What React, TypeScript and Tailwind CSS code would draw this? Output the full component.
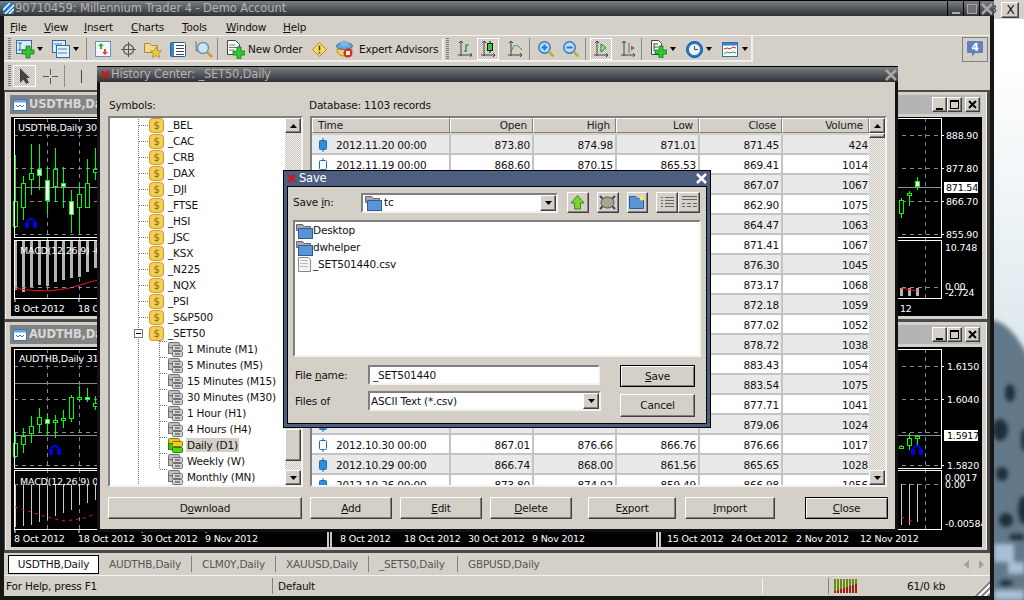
import React from "react";

type IC = { className?: string };
const Svg = ({ w, h, className, children }: { w: number; h: number; className?: string; children: React.ReactNode }) => (
  <svg width={w} height={h} viewBox={`0 0 ${w} ${h}`} className={`shrink-0 ${className ?? ""}`}>{children}</svg>
);

const Grip = ({ className }: IC) => (
  <div className={`w-[3px] h-[22px] shrink-0 bg-[repeating-linear-gradient(#777_0_1px,transparent_1px_2px)] ${className ?? ""}`} />
);
const Sep = ({ className }: IC) => <div className={`w-[1px] h-[22px] shrink-0 bg-[#8a8a86] ${className ?? ""}`} />;
const Caret = ({ className }: IC) => (
  <Svg w={6} h={4} className={className}><path d="M0 0h6L3 4z" fill="#000" /></Svg>
);
const GreenPlus = ({ x, y }: { x: number; y: number }) => (
  <path transform={`translate(${x} ${y})`} d="M4 0h4v4h4v4H8v4H4V8H0V4h4z" fill="#2fc92f" stroke="#107a10" strokeWidth="0.8" />
);
const Axes = ({ x = 0 }: { x?: number }) => (
  <g transform={`translate(${x} 0)`} stroke="#444" fill="none"><path d="M3 1v15M0 15h14M1 3l2-2 2 2M12 13l2 2-2 2" /></g>
);

const NewChart = ({ className }: IC) => (
  <Svg w={19} h={19} className={className}>
    <rect x="0.5" y="0.5" width="15" height="13" fill="#dfeaf6" stroke="#2a6db0" />
    <path d="M2 3h4M4 3v7M2 10h9" stroke="#2a6db0" />
    <GreenPlus x={6} y={6} />
  </Svg>
);
const Profile = ({ className }: IC) => (
  <Svg w={18} h={18} className={className}>
    <rect x="0.5" y="0.5" width="13" height="12" fill="#dfeaf6" stroke="#2a6db0" />
    <rect x="4.5" y="5.5" width="13" height="12" fill="#e8f0f8" stroke="#2a6db0" />
    <path d="M2 4h8M6 9h9M6 13h9" stroke="#4480bb" />
  </Svg>
);
const Market = ({ className }: IC) => (
  <Svg w={16} h={16} className={className}>
    <rect x="0.5" y="0.5" width="15" height="15" fill="#f4f8fc" stroke="#5f93c9" />
    <path d="M6 2l3 3H7v3H5V5H3z" fill="#2eb52e" /><path d="M10 14l-3-3h2V8h2v3h2z" fill="#e04a2a" />
  </Svg>
);
const Cross = ({ className }: IC) => (
  <Svg w={15} h={15} className={className}>
    <circle cx="7.5" cy="7.5" r="5" fill="none" stroke="#666" strokeWidth="1.5" />
    <path d="M7.5 0v15M0 7.5h15" stroke="#555" />
  </Svg>
);
const FolderStar = ({ className }: IC) => (
  <Svg w={18} h={17} className={className}>
    <path d="M0.5 2.5h5l2 2h6v7h-13z" fill="#f3d98a" stroke="#a68a3c" />
    <path d="M12 6l1.7 3.6 3.8.4-2.8 2.6.8 3.9-3.5-2-3.5 2 .8-3.9L6.500 10l3.800-.4z" fill="#f0c93a" stroke="#a08420" strokeWidth="0.7" />
  </Svg>
);
const ListIcon = ({ className }: IC) => (
  <Svg w={16} h={15} className={className}>
    <rect x="0.500" y="0.500" width="15" height="14" rx="1" fill="#fff" stroke="#1f5f9f" />
    <rect x="1" y="1" width="3" height="13" fill="#3b83c9" />
    <path d="M6 3.500h8M6 6.500h8M6 9.500h8M6 12.500h8" stroke="#444" />
  </Svg>
);
const Tester = ({ className }: IC) => (
  <Svg w={18} h={18} className={className}>
    <path d="M1 1v10h10" stroke="#777" fill="none" />
    <circle cx="8" cy="8" r="5.500" fill="#cfe2f3" stroke="#6a8fb0" strokeWidth="1.400" />
    <path d="M12 12l5 5" stroke="#c9a030" strokeWidth="2.500" />
  </Svg>
);
const NewOrder = ({ className }: IC) => (
  <Svg w={18} h={19} className={className}>
    <path d="M0.500 0.500h8l4 4v10h-12z" fill="#fff" stroke="#444" />
    <path d="M2 5h6M2 7.500h8M2 10h5" stroke="#777" />
    <GreenPlus x={6} y={7} />
  </Svg>
);
const Warn = ({ className }: IC) => (
  <Svg w={15} h={15} className={className}>
    <path d="M7.500 0.500l7 7-7 7-7-7z" fill="#f7d860" stroke="#b08a20" />
    <path d="M7.500 3.500v5M7.500 10v1.500" stroke="#444" strokeWidth="1.500" />
  </Svg>
);
const EA = ({ className }: IC) => (
  <Svg w={17} h={18} className={className}>
    <path d="M1 9c0 5 3 7 8 7s7-2 7-7z" fill="#f4cf60" stroke="#b08a20" />
    <ellipse cx="8.500" cy="6" rx="8" ry="3.500" fill="#6aa5d8" stroke="#3a6f9f" />
    <ellipse cx="8.500" cy="3.500" rx="4" ry="3" fill="#7cb6e4" />
    <circle cx="12" cy="13" r="4.500" fill="#d92a1a" /><rect x="10" y="11" width="4" height="4" fill="#fff" />
  </Svg>
);
const BarChartI = ({ className }: IC) => (
  <Svg w={14} h={18} className={className}>
    <Axes /><path d="M8 12V5h3M8 11H6" stroke="#1a8a1a" fill="none" strokeWidth="1.200" />
  </Svg>
);
const CandleI = ({ className }: IC) => (
  <Svg w={15} h={18} className={className}>
    <Axes /><path d="M9 1v12" stroke="#111" /><rect x="6.500" y="3.500" width="5" height="7" fill="#2fd02f" stroke="#111" />
  </Svg>
);
const LineI = ({ className }: IC) => (
  <Svg w={15} h={18} className={className}>
    <Axes /><path d="M3 12C6 3 9 4 14 10" stroke="#2a9a2a" fill="none" />
  </Svg>
);
const ZoomI = ({ plus, className }: IC & { plus?: boolean }) => (
  <Svg w={16} h={16} className={className}>
    <circle cx="6.500" cy="6.500" r="5.700" fill="#bcdcf8" stroke="#2a78c0" strokeWidth="1.400" />
    <path d={plus ? "M3.500 6.500h6M6.500 3.500v6" : "M3.500 6.500h6"} stroke="#2a78c0" strokeWidth="2" />
    <path d="M10.500 10.500l5 5" stroke="#caa53a" strokeWidth="2.500" />
  </Svg>
);
const AutoI = ({ className }: IC) => (
  <Svg w={15} h={18} className={className}>
    <Axes /><path d="M7 4l5 4-5 4z" fill="#9be29b" stroke="#1a8a1a" />
  </Svg>
);
const ShiftI = ({ className }: IC) => (
  <Svg w={15} h={18} className={className}>
    <Axes /><path d="M8 3v10" stroke="#2a78c0" /><path d="M14 8l-4-2.500v5z" fill="#d8481c" />
  </Svg>
);
const AddI = ({ className }: IC) => (
  <Svg w={16} h={18} className={className}>
    <path d="M0.500 0.500h7l3 3v11h-10z" fill="#fff" stroke="#444" />
    <path d="M3 3v8M3 4h4M3 7h4" stroke="#444" />
    <GreenPlus x={4} y={6} />
  </Svg>
);
const ClockI = ({ className }: IC) => (
  <Svg w={17} h={17} className={className}>
    <circle cx="8.500" cy="8.500" r="8" fill="#1f7fd0" stroke="#0f4f90" />
    <circle cx="8.500" cy="8.500" r="5.500" fill="#f2f2f2" />
    <path d="M8.500 5v3.500H12" stroke="#444" fill="none" />
  </Svg>
);
const TemplateI = ({ className }: IC) => (
  <Svg w={16} h={15} className={className}>
    <rect x="0.500" y="0.500" width="15" height="14" fill="#fff" stroke="#2a6db0" />
    <rect x="1" y="1" width="14" height="2.500" fill="#3b83c9" />
    <path d="M2 7l3-1 3 1 3-2 3 1" stroke="#c03020" fill="none" />
    <path d="M2 12l3-2 3 1 3-1 3 1" stroke="#2a9a2a" fill="none" />
  </Svg>
);

const Active = ({ className, children, h = "h-[22px]" }: IC & { children: React.ReactNode; h?: string }) => (
  <div className={`w-[22px] ${h} shrink-0 flex items-center justify-center border border-white bg-[repeating-conic-gradient(#bdb9b2_0_25%,#ece9e3_0_50%)] bg-[length:2px_2px] ${className ?? ""}`}>
    {children}
  </div>
);

const RedX = () => (
  <Svg w={9} h={9}><path d="M1 1l7 7M8 1L1 8" stroke="#e01010" strokeWidth="2" /></Svg>
);

const btn = "flex items-center justify-center bg-[#d4d0c8] border border-t-white border-l-white border-r-[#404040] border-b-[#404040] shadow-[inset_-1px_-1px_0_#808080] text-[#111]";
const defBtn = "flex items-center justify-center bg-[#d4d0c8] border border-black shadow-[inset_1px_1px_0_#fff,inset_-1px_-1px_0_#808080] text-[#111]";
const dither = "bg-[repeating-conic-gradient(#c8c4bc_0_25%,#f4f3f0_0_50%)] bg-[length:2px_2px]";
const sunken = "border-2 border-t-[#808080] border-l-[#808080] border-r-[#f4f3f0] border-b-[#f4f3f0]";

const Arrow = ({ up }: { up?: boolean }) => (
  <div className={`w-[16px] h-[15px] shrink-0 ${btn}`}>
    <Svg w={7} h={4}><path d={up ? "M3.500 0L7 4H0z" : "M0 0h7L3.500 4z"} fill="#000" /></Svg>
  </div>
);

// ---------- charts ----------
type C = [number, number, number, number, number, boolean];
const Candles = ({ data }: { data: C[] }) => (
  <g shapeRendering="crispEdges">
    {data.map(([x, wt, wb, bt, bb, f], i) => (
      <g key={i}>
        <rect x={x} y={wt} width={1} height={wb - wt} fill="#00ff00" />
        <rect x={x - 1.5} y={bt + 0.5} width={4} height={Math.max(bb - bt - 1, 2)} fill={f ? "#fff" : "#000"} stroke="#00ff00" />
      </g>
    ))}
  </g>
);
const Phones = ({ x, y }: { x: number; y: number }) => (
  <g transform={`translate(${x} ${y})`}>
    <path d="M-4 3v-2a4 4 0 0 1 8 0v2" fill="none" stroke="#0000f0" strokeWidth="1.800" />
    <rect x="-6" y="0" width="4" height="6" rx="1" fill="#0000f0" /><rect x="2" y="0" width="4" height="6" rx="1" fill="#0000f0" />
  </g>
);
const L = ({ x, y, t, c = "#fff", a }: { x: number; y: number; t: string; c?: string; a?: "end" }) => (
  <text x={x} y={y} fill={c} fontSize="9.500" textAnchor={a} fontFamily="'DejaVu Sans',sans-serif">{t}</text>
);
const grid = { stroke: "#7a8a9a", strokeDasharray: "4 4", fill: "none" };

const Chart1 = () => {
  const bars: [number, number][] = [[15, 290], [23, 292], [31, 287], [39, 285], [47, 286], [55, 282], [63, 280], [71, 278], [79, 277], [87, 272], [95, 268]];
  return (
    <svg width={971} height={199} viewBox="11 117 971 199" className="block">
      {[135, 168, 201, 234].map((y) => <path key={y} d={`M14 ${y}.5H941`} {...grid} />)}
      {[47.500, 79.500, 925.500].map((x) => <path key={x} d={`M${x} 118V298`} {...grid} />)}
      <path d="M14 187.500H941" stroke="#8a8f96" />
      <Candles data={[[15, 155, 228, 201, 227, false], [23, 176, 220, 183, 208, false], [31, 144, 195, 173, 180, false], [39, 144, 190, 169, 176, true], [47, 167, 214, 180, 201, true], [55, 148, 202, 169, 187, false], [63, 167, 208, 183, 187, true], [71, 190, 233, 201, 215, true], [79, 183, 233, 194, 208, false], [87, 159, 208, 183, 208, false], [95, 148, 180, 169, 173, false], [901, 198, 218, 200, 214, false], [909, 191, 206, 193, 196, false], [917, 177, 190, 181, 187, true]]} />
      <Phones x={31} y={222} />
      {bars.map(([x, b]) => <rect key={x} x={x - 1} y={240} width={3} height={b - 240} fill="#b4b4b4" />)}
      {[901, 909, 917].map((x) => <rect key={x} x={x - 1} y={288} width={3} height={8} fill="#b4b4b4" />)}
      <path d="M14 288l12 2 24 1 20-3 20-6 8-2M901 288l16 3" stroke="#ff1010" fill="none" />
      <path d="M14 287.500H941" {...grid} />
      <rect x="14.500" y="118.500" width="927" height="119" fill="none" stroke="#fff" />
      <rect x="14.500" y="240.500" width="927" height="58" fill="none" stroke="#fff" />
      <L x={18} y={131} t="USDTHB,Daily  30." />
      <L x={20} y={254} t="MACD(12,26,9) -0.J" />
      <L x={14} y={312} t="8 Oct 2012" /><L x={78} y={312} t="18 Oct 2012" /><L x={900} y={312} t="12" />
      <path d="M15 298v4M79 298v4" stroke="#fff" />
      {[[888.9, 139], [877.8, 172], [866.7, 205], [855.9, 238]].map(([v, y]) => <g key={v}><path d={`M941 ${y - 4}.5h3`} stroke="#fff" /><L x={946} y={y} t={v.toFixed(2)} /></g>)}
      <rect x="944" y="182" width="34" height="11" fill="#fff" />
      <L x={946} y={191} t="871.54" c="#000" />
      <L x={945} y={251} t="10.748" /><L x={945} y={290} t="0.00" /><L x={945} y={296} t="-2.724" />
    </svg>
  );
};

const Chart2 = () => {
  const bars: [number, number][] = [[15, 527], [23, 526], [31, 525], [39, 522], [47, 520], [55, 516], [63, 513], [71, 510], [79, 505], [87, 503], [95, 500]];
  return (
    <svg width={971} height={200} viewBox="11 347 971 200" className="block">
      {[366, 399, 432, 465].map((y) => <path key={y} d={`M14 ${y}.5H941`} {...grid} />)}
      {[47.500, 79.500, 925.500].map((x) => <path key={x} d={`M${x} 349V529`} {...grid} />)}
      <path d="M14 383.500H100M14 435.500H941" stroke="#8a8f96" />
      <Candles data={[[15, 432, 458, 443, 457, false], [23, 428, 453, 436, 445, false], [31, 416, 443, 426, 434, false], [39, 408, 433, 417, 425, false], [47, 414, 436, 419, 424, true], [55, 415, 438, 420, 423, false], [63, 410, 428, 418, 420, false], [71, 395, 422, 397, 419, false], [79, 386, 402, 397, 398, false], [87, 388, 402, 397, 399, true], [95, 396, 410, 403, 407, false], [901, 445, 448, 446, 447, false], [909, 433, 450, 438, 446, false], [917, 435, 445, 436, 438, false]]} />
      <Phones x={55} y={449} /><Phones x={917} y={449} />
      {bars.map(([x, b]) => <rect key={x} x={x} y={484} width={1} height={b - 484} fill="#c8c8c8" />)}
      {[[901, 525], [909, 525], [917, 522]].map(([x, b]) => <rect key={x} x={x} y={484} width={1} height={b - 484} fill="#c8c8c8" />)}
      <path d="M15 507l32 10 18 4 20-3 10-4" stroke="#ff1010" strokeDasharray="3 4" fill="none" />
      <path d="M901 517l3 1M908 521h4" stroke="#ff1010" />
      <path d="M14 484.500H941" {...grid} />
      <rect x="14.500" y="349.500" width="927" height="119" fill="none" stroke="#fff" />
      <rect x="14.500" y="470.500" width="927" height="59" fill="none" stroke="#fff" />
      <L x={19} y={362} t="AUDTHB,Daily  31." />
      <L x={20} y={485} t="MACD(12,26,9) 0.0" />
      {[["8 Oct 2012", 14], ["18 Oct 2012", 78], ["30 Oct 2012", 141], ["9 Nov 2012", 205], ["8 Oct 2012", 340], ["18 Oct 2012", 404], ["30 Oct 2012", 468], ["9 Nov 2012", 532], ["15 Oct 2012", 667], ["24 Oct 2012", 731], ["2 Nov 2012", 796], ["12 Nov 2012", 860]].map(([t, x]) => <L key={`${t}${x}`} x={x as number} y={542} t={t as string} />)}
      <path d="M15 529v4M79 529v4M142 529v4M206 529v4" stroke="#fff" />
      <rect x="327" y="531" width="2" height="16" fill="#c8c8c8" /><rect x="330" y="531" width="2" height="16" fill="#c8c8c8" />
      <rect x="656" y="531" width="2" height="16" fill="#c8c8c8" /><rect x="659" y="531" width="2" height="16" fill="#c8c8c8" />
      {[["1.6150", 370], ["1.6040", 403], ["1.5820", 469]].map(([v, y]) => <g key={v}><path d={`M941 ${(y as number) - 4}.5h3`} stroke="#fff" /><L x={947} y={y as number} t={v as string} /></g>)}
      <rect x="944" y="430" width="34" height="11" fill="#fff" />
      <L x={947} y={439} t="1.5917" c="#000" />
      <L x={945} y={481} t="0.0017" /><L x={945} y={488} t="0.00" /><L x={945} y={527} t="-0.00584" />
    </svg>
  );
};

const ChildButtons = () => (
  <div className="ml-auto mr-[1px] flex items-center">
    <div className={`w-[15px] h-[15px] relative ${btn}`}><div className="w-[7px] h-[2px] bg-black mt-[8px]" /></div>
    <div className={`w-[15px] h-[15px] ${btn}`}><div className="w-[9px] h-[9px] border border-black border-t-2" /></div>
    <div className={`w-[15px] h-[15px] ml-[3px] ${btn}`}><Svg w={9} h={9}><path d="M1 1l7 7M8 1L1 8" stroke="#000" strokeWidth="2" /></Svg></div>
  </div>
);

const Child = ({ title, top, h, children }: { title: string; top: string; h: string; children: React.ReactNode }) => (
  <div className={`absolute left-[1px] w-[982px] ${top} ${h} flex flex-col bg-[#d4d0c8] border-x border-[#f0f0f0] pl-[5px] pr-[4px] pt-[3px]`}>
    <div className="h-[19px] shrink-0 -ml-[1px] mr-[1px] flex items-center pl-[3px] bg-gradient-to-r from-[#808080] to-[#b8b8b8]">
      <Svg w={15} h={15}><rect x="0.500" y="2.500" width="13" height="11" fill="#fff" stroke="#3a7ac0" /><rect x="1" y="3" width="12" height="2.500" fill="#6aa5e0" /><path d="M3 8l2 2 2-2 2 2 2-2" stroke="#3a7ac0" fill="none" /></Svg>
      <span className="ml-[1px] font-bold text-[11.500px] text-[#d8d8d8]">{title}</span>
      <ChildButtons />
    </div>
    <div className="mt-[3px] bg-black overflow-hidden">{children}</div>
  </div>
);

// ---------- tree ----------
const Coin = () => (
  <Svg w={15} h={15}>
    <rect x="0.500" y="0.500" width="14" height="14" rx="3" fill="#f6cd55" stroke="#c79a2a" />
    <text x="7.500" y="11" fontSize="10" textAnchor="middle" fill="#8a6a10" fontFamily="'DejaVu Sans',sans-serif">$</text>
  </Svg>
);
const Stack = ({ on }: { on?: boolean }) => (
  <Svg w={15} h={15}>
    <rect x="0.500" y="0.500" width="11" height="6" rx="1" fill={on ? "#e8c820" : "#bdbdbd"} stroke={on ? "#8a7410" : "#707070"} />
    <rect x="0.500" y="5.500" width="5" height="6" fill={on ? "#38c818" : "#bdbdbd"} stroke={on ? "#208010" : "#707070"} />
    <rect x="4.500" y="3.500" width="10" height="5" rx="1" fill={on ? "#f0d020" : "#d4d4d4"} stroke={on ? "#8a7410" : "#707070"} />
    <rect x="4.500" y="9.500" width="10" height="5" rx="1" fill={on ? "#50d810" : "#d4d4d4"} stroke={on ? "#208010" : "#707070"} />
    {!on && <path d="M7 6h5M7 12h5" stroke="#333" />}
  </Svg>
);
const Sym = ({ t }: { t?: string }) => (
  <div className="h-[16px] flex items-center pl-[39px] shrink-0"><Coin />{t && <span className="ml-[4px] text-[#111]">{t}</span>}</div>
);
const Tf = ({ t, on }: { t: string; on?: boolean }) => (
  <div className="h-[16px] flex items-center pl-[58px] shrink-0"><Stack on={on} /><span className={`ml-[3px] px-[1px] py-[2px] text-[#111] ${on ? "bg-[#d4d0c8]" : ""}`}>{t}</span></div>
);

const Tree = () => (
  <div className={`w-[195px] relative flex flex-col overflow-hidden bg-white ${sunken}`}>
    <div className="flex flex-col -mt-[1px]">
      {["_BEL", "_CAC", "_CRB", "_DAX", "_DJI", "_FTSE", "_HSI", "_JSC", "_KSX", "_N225", "_NQX", "_PSI", "_S&P500", "_SET50"].map((s) => <Sym key={s} t={s} />)}
      {["1 Minute (M1)", "5 Minutes (M5)", "15 Minutes (M15)", "30 Minutes (M30)", "1 Hour (H1)", "4 Hours (H4)"].map((s) => <Tf key={s} t={s} />)}
      <Tf t="Daily (D1)" on />
      <Tf t="Weekly (W)" /><Tf t="Monthly (MN)" />
      <Sym />
    </div>
    <svg className="absolute left-0 -top-[1px] pointer-events-none" width={175} height={370}>
      <g stroke="#777" strokeDasharray="1 1" fill="none">
        <path d="M28.500 0V370M49.500 224V352" />
        {Array.from({ length: 13 }, (_, i) => <path key={i} d={`M29 ${8.500 + i * 16}h9`} />)}
        {Array.from({ length: 9 }, (_, i) => <path key={i} d={`M50 ${224.500 + i * 16}h8`} />)}
      </g>
      <rect x="24.500" y="212.500" width="8" height="8" fill="#fff" stroke="#777" />
      <path d="M26 216.500h5" stroke="#000" />
    </svg>
    <div className="absolute right-0 top-0 bottom-0 w-[16px] flex flex-col">
      <Arrow up />
      <div className={`h-[296px] ${dither}`} />
      <div className={`h-[32px] ${btn}`} />
      <div className={`flex-1 ${dither}`} />
      <Arrow />
    </div>
  </div>
);

// ---------- table ----------
const rows: (string | number)[][] = [
  ["2012.11.20 00:00", "873.80", "874.98", "871.01", "871.45", 424],
  ["2012.11.19 00:00", "868.60", "870.15", "865.53", "869.41", 1014],
  ["", "", "", "", "867.07", 1067],
  ["", "", "", "", "862.90", 1075],
  ["", "", "", "", "864.47", 1063],
  ["", "", "", "", "871.41", 1067],
  ["", "", "", "", "876.30", 1045],
  ["", "", "", "", "873.17", 1068],
  ["", "", "", "", "872.18", 1059],
  ["", "", "", "", "877.02", 1052],
  ["", "", "", "", "878.72", 1038],
  ["", "", "", "", "883.43", 1054],
  ["", "", "", "", "883.54", 1075],
  ["", "", "", "", "877.71", 1041],
  ["", "", "", "", "879.06", 1024],
  ["2012.10.30 00:00", "867.01", "876.66", "866.76", "876.66", 1017],
  ["2012.10.29 00:00", "866.74", "868.00", "861.56", "865.65", 1028],
  ["2012.10.26 00:00", "873.80", "874.92", "859.49", "866.98", 1056],
];
const fills = [true, false, true, false, false, true, true, false, true, false, true, false, true, false, true, false, true, true];
const Hd = ({ t, w, left }: { t: string; w: string; left?: boolean }) => (
  <div className={`${w} h-full shrink-0 flex items-center border border-t-white border-l-white border-r-[#808080] border-b-[#808080] ${left ? "pl-[5px]" : "justify-end pr-[5px]"} text-[#222]`}>{t}</div>
);
const cell = "w-[83px] shrink-0 h-full flex items-center justify-end pr-[2px] pt-[2px] border-r-2 border-[#c4c4c4] text-[#111]";
const Table = () => (
  <div className={`w-[577px] relative flex flex-col overflow-hidden bg-[#d4d0c8] ${sunken}`}>
    <div className="flex h-[15px] shrink-0 w-[557px]">
      <Hd t="Time" w="w-[138px]" left /><Hd t="Open" w="w-[83px]" /><Hd t="High" w="w-[83px]" /><Hd t="Low" w="w-[83px]" /><Hd t="Close" w="w-[83px]" /><Hd t="Volume" w="w-[87px]" />
    </div>
    <div className="mt-[2px] w-[557px] flex flex-col">
      {rows.map((r, i) => (
        <div key={i} className={`h-[20px] shrink-0 flex border-b-2 border-[#c4c4c4] ${i % 2 ? "bg-white" : "bg-[#e9e9e9]"}`}>
          <div className="w-[139px] shrink-0 h-full flex items-center pl-[6px] pt-[2px] border-r-2 border-[#c4c4c4] text-[#111]">
            <Svg w={10} h={14}><path d="M5 0v14" stroke="#1a6fb0" /><rect x="1.500" y="2.500" width="7" height="9" rx="1" fill={fills[i] ? "#2f8fdc" : "#fff"} stroke="#1a6fb0" /></Svg>
            <span className="ml-[8px]">{r[0]}</span>
          </div>
          <div className={cell}>{r[1]}</div><div className={cell}>{r[2]}</div><div className={cell}>{r[3]}</div><div className={cell}>{r[4]}</div>
          <div className="flex-1 h-full flex items-center justify-end pr-[1px] pt-[2px] text-[#111]">{r[5]}</div>
        </div>
      ))}
    </div>
    <div className={`absolute right-0 top-0 bottom-0 w-[16px] flex flex-col ${dither}`}>
      <Arrow up />
      <div className={`h-[5px] shrink-0 ${btn}`} />
      <div className="flex-1" />
      <Arrow />
    </div>
  </div>
);

const Folder = () => (
  <Svg w={17} h={16}>
    <path d="M0.500 1.500h6l2 2h6v4h-14z" fill="#a8a8a8" stroke="#666" />
    <rect x="2.500" y="5.500" width="14" height="10" fill="#5b94d4" stroke="#2a5f9f" />
  </Svg>
);

const SaveDialog = () => (
  <div className="absolute left-[283px] top-[170px] w-[428px] h-[258px] border border-black bg-[#4d5e80] flex flex-col px-[3px] pb-[3px]">
    <div className="h-[15px] shrink-0 flex items-center text-[11.500px] text-white">
      <RedX /><span className="ml-[3px]">Save</span>
      <Svg w={13} h={13} className="ml-auto -mr-[1px]"><path d="M2 2l9 9M11 2l-9 9" stroke="#fff" strokeWidth="2.500" /></Svg>
    </div>
    <div className="flex-1 bg-[#d4d0c8] border border-black flex flex-col pl-[5px] pr-[6px] pt-[5px] text-[#111]">
      <div className="flex items-center h-[21px] shrink-0">
        <span className="w-[68px] shrink-0">Save <span className="underline">i</span>n:</span>
        <div className={`w-[197px] h-[20px] shrink-0 flex items-center bg-white ${sunken} pl-[2px]`}>
          <Folder /><span className="ml-[2px]">tc</span>
          <div className={`ml-auto w-[16px] h-[16px] ${btn}`}><Svg w={7} h={4}><path d="M0 0h7L3.500 4z" fill="#000" /></Svg></div>
        </div>
        <div className={`ml-[9px] w-[23px] h-[21px] ${btn}`}><Svg w={15} h={15}><path d="M7.500 0.500L14 8h-3.500v6h-6V8H1z" fill="#7fd12f" stroke="#3a8a20" /></Svg></div>
        <div className={`ml-[8px] w-[23px] h-[21px] ${btn}`}><Svg w={17} h={15}><path d="M1 1l3 3M16 1l-3 3M1 14l3-3M16 14l-3-3" stroke="#2a4a7a" strokeWidth="2" /><ellipse cx="8.500" cy="7.500" rx="6.500" ry="5.500" fill="#a8a888" stroke="#555" /></Svg></div>
        <div className={`ml-[8px] w-[23px] h-[21px] ${btn}`}><Svg w={16} h={15}><path d="M0.500 1.500h6l2 2h6v10h-14z" fill="#5b94d4" stroke="#2a5f9f" /><circle cx="13" cy="3" r="2.500" fill="#f8e860" /></Svg></div>
        <div className={`ml-[8px] w-[23px] h-[21px] ${btn}`}><Svg w={15} h={15}><path d="M5 2.500h9M5 5.500h9M5 8.500h9M5 11.500h9M1 2.500h2M1 5.500h2M1 8.500h2M1 11.500h2" stroke="#666" /></Svg></div>
        <div className={`w-[23px] h-[21px] ${btn}`}><Svg w={17} h={15}><path d="M1 1.500h15M1 4.500h15M1 8.500h3M6 8.500h4M12 8.500h4M1 11.500h3M6 11.500h4M12 11.500h4" stroke="#666" /></Svg></div>
      </div>
      <div className={`mt-[7px] w-[408px] h-[137px] shrink-0 bg-white pl-[1px] flex flex-col ${sunken}`}>
        {["Desktop", "dwhelper"].map((n) => <div key={n} className="h-[17px] flex items-center"><Folder /><span>{n}</span></div>)}
        <div className="h-[17px] flex items-center">
          <Svg w={17} h={15}><path d="M2.500 0.500h10l2 2v12h-12z" fill="#f4f4f4" stroke="#888" /><path d="M4 3.500h8M4 6.500h8M4 9.500h8" stroke="#bbb" /></Svg>
          <span>_SET501440.csv</span>
        </div>
      </div>
      <div className="flex mt-[8px]">
        <div className="flex flex-col pl-[2px]">
          <div className="flex items-center h-[20px]">
            <span className="w-[73px] shrink-0">File <span className="underline">n</span>ame:</span>
            <div className={`w-[232px] h-[20px] bg-white flex items-center pl-[3px] ${sunken}`}>_SET501440</div>
          </div>
          <div className="flex items-center h-[20px] mt-[6px]">
            <span className="w-[73px] shrink-0">Files of</span>
            <div className={`w-[233px] h-[20px] bg-white flex items-center pl-[1px] ${sunken}`}>
              ASCII Text (*.csv)
              <div className={`ml-auto w-[16px] h-[16px] ${btn}`}><Svg w={7} h={4}><path d="M0 0h7L3.500 4z" fill="#000" /></Svg></div>
            </div>
          </div>
        </div>
        <div className="flex flex-col ml-[19px]">
          <div className={`w-[75px] h-[22px] ${defBtn}`}><span><span className="underline">S</span>ave</span></div>
          <div className={`w-[75px] h-[23px] mt-[7px] ${btn}`}>Cancel</div>
        </div>
      </div>
    </div>
  </div>
);

const HistoryDialog = () => (
  <div className="absolute left-[97px] top-[66px] w-[801px] h-[466px] border-x-[3px] border-b-[3px] border-[#111] flex flex-col bg-[#d4d0c8]">
    <div className="h-[16px] -mx-[3px] shrink-0 flex items-center pl-[4px] border-t border-black text-[11.500px] text-[#b4b4b4] bg-gradient-to-b from-[#7c7f82] to-[#2f3236]">
      <RedX /><span className="ml-[1px]">History Center: _SET50,Daily</span>
      <Svg w={14} h={14} className="ml-auto"><path d="M2 2l10 10M12 2L2 12" stroke="#a8a8a8" strokeWidth="2.500" /></Svg>
    </div>
    <div className="flex-1 flex flex-col pl-[8px] pt-[16px] text-[#111] min-h-0">
      <div className="flex h-[14px] items-center shrink-0">
        <span className="w-[201px] pl-[1px]">Symbols:</span><span>Database: 1103 records</span>
      </div>
      <div className="mt-[4px] h-[371px] shrink-0 flex">
        <Tree />
        <div className="w-[7px] shrink-0" />
        <Table />
      </div>
      <div className="mt-[10px] h-[22px] flex">
        <div className={`w-[194px] ${btn}`}><span>D<span className="underline">o</span>wnload</span></div>
        <div className={`w-[82px] ml-[8px] ${btn}`}><span><span className="underline">A</span>dd</span></div>
        <div className={`w-[82px] ml-[8px] ${btn}`}><span><span className="underline">E</span>dit</span></div>
        <div className={`w-[82px] ml-[8px] ${btn}`}><span><span className="underline">D</span>elete</span></div>
        <div className={`w-[88px] ml-[16px] ${btn}`}><span>E<span className="underline">x</span>port</span></div>
        <div className={`w-[90px] ml-[9px] ${btn}`}><span><span className="underline">I</span>mport</span></div>
        <div className={`w-[83px] ml-[30px] ${defBtn}`}><span><span className="underline">C</span>lose</span></div>
      </div>
    </div>
  </div>
);

const Menu = ({ t, u, w }: { t: string; u: string; w: string }) => (
  <span className={`${w} shrink-0 text-[#111]`}><span className="underline">{u}</span>{t}</span>
);

const Tab = ({ t, w, sep = true }: { t: string; w: string; sep?: boolean }) => (
  <div className={`${w} h-[16px] shrink-0 pl-[10px] flex items-center text-[#555] ${sep ? "border-r border-[#808080]" : ""}`}>{t}</div>
);

export default function App() {
  return (
    <div className="relative w-[1024px] h-[600px] overflow-hidden bg-white text-[10.500px] tracking-[-0.2px] leading-none [font-family:'DejaVu_Sans',sans-serif]">
      {/* desktop wallpaper */}
      <svg className="absolute left-[994px] top-0" width={30} height={600} viewBox="994 0 30 600">
        <defs>
          <linearGradient id="sky" x1="0" y1="0" x2="0" y2="1"><stop offset="0.1" stopColor="#ffffff" /><stop offset="0.55" stopColor="#dfeaee" /></linearGradient>
          <filter id="bl" x="-50%" y="-50%" width="200%" height="200%"><feGaussianBlur stdDeviation="2" /></filter>
        </defs>
        <rect x="994" y="0" width="30" height="600" fill="url(#sky)" />
        <path d="M980 322c18-8 34 6 50 38V620H980z" fill="#64798a" filter="url(#bl)" />
        <g filter="url(#bl)" fill="#1f2f3a">
          <ellipse cx="1010" cy="393" rx="5" ry="9" />
          <ellipse cx="1000" cy="430" rx="8" ry="11" />
          <ellipse cx="1002" cy="474" rx="6" ry="7" />
          <ellipse cx="1024" cy="510" rx="6" ry="14" />
          <ellipse cx="1006" cy="520" rx="7" ry="7" />
          <ellipse cx="1024" cy="440" rx="3" ry="12" />
          <ellipse cx="1006" cy="583" rx="7" ry="3" />
          <rect x="1010" y="534" width="14" height="6" />
        </g>
        <g filter="url(#bl)" fill="#a9bfd4">
          <rect x="994" y="544" width="20" height="18" /><rect x="1008" y="562" width="16" height="12" /><rect x="994" y="590" width="30" height="10" />
        </g>
      </svg>
      <div className="absolute left-[993px] top-0 w-[31px] h-[19px] bg-[#d4d0c8] flex items-center text-[#222]">
        <span className="ml-[-3px]">8</span>
        <div className={`ml-[5px] w-[18px] h-[16px] ${btn} text-[12px]`}>X</div>
      </div>

      {/* main window */}
      <div className="absolute left-0 top-0 w-[994px] h-[600px] flex flex-col">
        <div className="h-[16px] shrink-0 flex items-center pl-[3px] border-t border-black text-[11.500px] text-[#b4b4b4] bg-gradient-to-b from-[#7c7f82] to-[#2f3236] tracking-[-0.1px]">
          <Svg w={11} h={11}><rect width="11" height="11" fill="#2a78c8" /><path d="M0 7L7 0M2 11l9-9M6 11l5-5" stroke="#fff" strokeWidth="1.500" /></Svg>
          <span className="ml-[1px]">90710459: Millennium Trader 4 - Demo Account</span>
          <div className="ml-auto flex items-center h-full">
            <div className="w-[16px] h-full border-l border-black flex items-end justify-center pb-[2px]"><div className="w-[8px] h-[2px] bg-[#a8a8a8]" /></div>
            <div className="w-[16px] h-full border-l border-black flex items-center justify-center"><div className="w-[10px] h-[10px] border border-[#a8a8a8] bg-[#707070]" /></div>
            <div className="w-[15px] h-full border-l border-black flex items-center"><Svg w={14} h={14}><path d="M2 2l10 10M12 2L2 12" stroke="#a8a8a8" strokeWidth="2.500" /></Svg></div>
          </div>
        </div>

        <div className="flex-1 flex flex-col min-h-0 border-x-[4px] border-b-[4px] border-[#161616] bg-[#d4d0c8]">
          {/* menu */}
          <div className="h-[20px] shrink-0 flex items-center pl-[6px] pt-[3px] border-b border-[#f2f2f0]">
            <Menu u="F" t="ile" w="w-[34px]" /><Menu u="V" t="iew" w="w-[40px]" /><Menu u="I" t="nsert" w="w-[47px]" /><Menu u="C" t="harts" w="w-[51px]" /><Menu u="T" t="ools" w="w-[44px]" /><Menu u="W" t="indow" w="w-[57px]" /><Menu u="H" t="elp" w="w-[30px]" />
          </div>
          {/* toolbar 1 */}
          <div className="h-[26px] shrink-0 flex items-center">
            <div className="h-full w-[749px] shrink-0 flex items-center pt-[2px] border-r-2 border-b-2 border-[#f0efec]">
              <Grip className="ml-[4px]" />
              <NewChart className="ml-[5px]" /><Caret className="ml-[2px]" />
              <Profile className="ml-[9px]" /><Caret className="ml-[3px]" />
              <Sep className="ml-[7px]" />
              <Market className="ml-[8px]" /><Cross className="ml-[10px]" /><FolderStar className="ml-[8px]" /><ListIcon className="ml-[8px]" /><Tester className="ml-[9px]" />
              <Sep className="ml-[4px]" />
              <NewOrder className="ml-[9px]" />
              <span className="ml-[3px] w-[54px] shrink-0 text-[#111] whitespace-nowrap">New Order</span>
              <Warn className="ml-[10px]" /><EA className="ml-[9px]" />
              <span className="ml-[6px] w-[78px] shrink-0 text-[#111] whitespace-nowrap">Expert Advisors</span>
              <div className="ml-[5px] w-[2px] h-full bg-[#f0efec]" />
              <Grip className="ml-[2px]" />
              <BarChartI className="ml-[9px]" />
              <Active className="ml-[5px]"><CandleI /></Active>
              <LineI className="ml-[9px]" />
              <Sep className="ml-[6px]" />
              <ZoomI plus className="ml-[8px]" /><ZoomI className="ml-[9px]" />
              <Sep className="ml-[6px]" />
              <Active className="ml-[4px]"><AutoI /></Active>
              <ShiftI className="ml-[9px]" />
              <Sep className="ml-[5px]" />
              <AddI className="ml-[9px]" /><Caret className="ml-[3px]" />
              <ClockI className="ml-[10px]" /><Caret className="ml-[3px]" />
              <TemplateI className="ml-[10px]" /><Caret className="ml-[4px]" />
            </div>
            <div className="ml-auto mr-[2px] w-[26px] h-[25px] border border-[#808080] flex items-center justify-center">
              <Svg w={16} h={17}><path d="M1 0h14a1 1 0 0 1 1 1v10a1 1 0 0 1-1 1H8l-3 4v-4H1a1 1 0 0 1-1-1V1a1 1 0 0 1 1-1z" fill="#5f83c0" /><text x="8" y="10" fontSize="10.500" fontWeight="bold" textAnchor="middle" fill="#fff" fontFamily="'DejaVu Sans',sans-serif">4</text></Svg>
            </div>
          </div>
          {/* toolbar 2 */}
          <div className="h-[28px] shrink-0 flex items-center">
            <Grip className="ml-[4px]" />
            <Active className="ml-[2px] w-[23px]" h="h-[22px]">
              <Svg w={11} h={17}><path d="M1 0v15l3.500-3.500L7 16l3-1.500L7.500 10H11z" fill="#444" /></Svg>
            </Active>
            <Svg w={15} h={15} className="ml-[7px]"><path d="M7.500 0v6M7.500 9v6M0 7.500h6M9 7.500h6" stroke="#555" /></Svg>
            <Sep className="ml-[6px]" />
            <div className="ml-[16px] w-[1px] h-[13px] bg-[#444]" />
          </div>
          {/* MDI */}
          <div className="relative flex-1 min-h-0 bg-[#4a4a4a] overflow-hidden">
            <Child title="USDTHB,Daily" top="top-[2px]" h="h-[227px]"><Chart1 /></Child>
            <Child title="AUDTHB,Daily" top="top-[232px]" h="h-[228px]"><Chart2 /></Child>
          </div>
          {/* tabs */}
          <div className="h-[23px] shrink-0 flex items-center border-b border-[#f2f2f0]">
            <div className="ml-[4px] w-[91px] h-[19px] shrink-0 bg-white border border-black flex items-center justify-center text-[#111]">USDTHB,Daily</div>
            <Tab t="AUDTHB,Daily" w="w-[93px]" /><Tab t="CLM0Y,Daily" w="w-[84px]" /><Tab t="XAUUSD,Daily" w="w-[93px]" /><Tab t="_SET50,Daily" w="w-[89px]" /><Tab t="GBPUSD,Daily" w="w-[90px]" sep={false} />
            <div className="ml-auto mr-[6px] flex gap-[10px]">
              <Svg w={5} h={9}><path d="M5 0v9L0 4.500z" fill="#a0a0a0" /></Svg>
              <Svg w={5} h={9}><path d="M0 0v9l5-4.500z" fill="#a0a0a0" /></Svg>
            </div>
          </div>
          {/* status */}
          <div className="h-[20px] shrink-0 flex items-center relative text-[#111]">
            <div className="w-[268px] shrink-0 pl-[2px]">For Help, press F1</div>
            <div className="w-[490px] shrink-0 h-[16px] flex items-center pl-[5px] border-l border-[#808080]">Default</div>
            <div className="w-[66px] shrink-0 h-[16px] border-l border-[#f4f4f2]" />
            <div className="h-[16px] flex items-center pl-[5px] border-l border-[#808080]">
              <Svg w={24} h={14}>
                {[0, 3, 6, 9, 12, 15, 18, 21].map((x, i) => (
                  <g key={x}><rect x={x} y={0} width={2} height={14 - 2 - i} fill="#6a8a10" /><rect x={x} y={12 - i} width={2} height={2 + i} fill="#a02010" /></g>
                ))}
              </Svg>
            </div>
            <span className="ml-[49px]">61/0 kb</span>
            <div className="ml-auto w-[16px] h-[16px] self-end bg-[repeating-linear-gradient(135deg,#888_0_2px,#f4f4f2_2px_4px)] [clip-path:polygon(100%_0,100%_100%,0_100%)]" />
          </div>
        </div>
      </div>

      <HistoryDialog />
      <SaveDialog />
    </div>
  );
}
